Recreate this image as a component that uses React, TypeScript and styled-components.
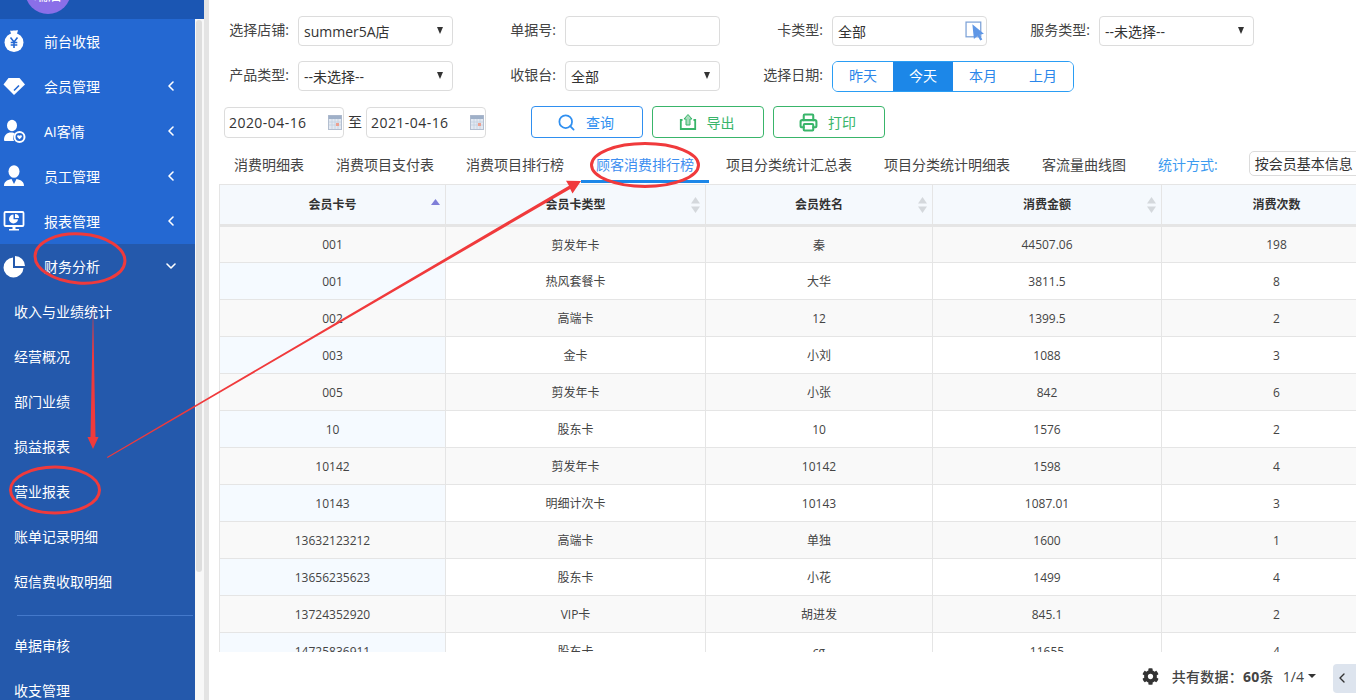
import React from "react";
import styled, { createGlobalStyle } from "styled-components";
import { ChevronLeft, ChevronDown, Search, Printer } from "lucide-react";
import { FaCog } from "react-icons/fa";

const FONT = `"Open Sans", "Noto Sans CJK SC", sans-serif`;

const Global = createGlobalStyle`
  html, body { margin: 0; padding: 0; height: 700px; overflow: hidden; background: #fff; }
  body { font-family: ${FONT}; color: #333; font-size: 14px; }
  * { box-sizing: border-box; }
`;

const Page = styled.div`
  position: relative;
  display: flex;
  width: 1356px;
  height: 700px;
  overflow: hidden;
`;

const SideColumn = styled.div`
  display: flex;
  flex-direction: column;
  width: 204px;
  flex: none;
  height: 700px;
`;
const SideHeader = styled.div`
  height: 19px;
  flex: none;
  background: #1b56b3;
  overflow: hidden;
`;
const Avatar = styled.div`
  width: 46px;
  height: 46px;
  margin: -32px 0 0 25px;
  border-radius: 50%;
  background: #8a6fe8;
  color: #fff;
  font-size: 14px;
  line-height: 54px;
  text-align: center;
`;
const SideBody = styled.div`
  display: flex;
  flex: 1;
  min-height: 0;
`;
const Nav = styled.nav`
  width: 195px;
  flex: none;
  background: #2468d2;
  overflow: hidden;
`;
const NavItem = styled.div`
  display: flex;
  align-items: center;
  height: 45px;
  padding: 0 16px 2px 2px;
  gap: 18px;
  color: #fff;
  font-size: 14px;
`;
const OpenGroup = styled.div`
  background: #2459ac;
  padding-bottom: 20px;
`;
const NavChevron = styled.span`
  display: flex;
  margin-left: auto;
`;
const SubItem = styled.div`
  display: flex;
  align-items: center;
  height: 45px;
  padding: 0 0 2px 14px;
  color: #fff;
  font-size: 14px;
`;
const SubDivider = styled.div`
  height: 1px;
  margin: 11px 2px 7px 17px;
  background: #4479cb;
`;
const ScrollTrack = styled.div`
  width: 9px;
  flex: none;
  background: #f8f8f8;
  padding: 1px 2px 0 1px;
`;
const ScrollThumb = styled.div`
  height: 552px;
  border-radius: 3px;
  background: #dedede;
`;
const Strip = styled.div`
  width: 5px;
  flex: none;
  background: #e4e4e4;
`;

const Main = styled.main`
  flex: 1;
  min-width: 0;
  display: flex;
  flex-direction: column;
  padding-top: 16px;
  overflow: hidden;
`;
const FilterRow = styled.div`
  display: flex;
  align-items: center;
  height: 30px;
  margin: 0 0 15px 20px;
  gap: 43px;
`;
const Field = styled.div`
  display: flex;
  align-items: center;
`;
const Label = styled.label`
  width: 69px;
  padding: 0 9px 4px 0;
  flex: none;
  text-align: right;
  font-size: 14px;
  white-space: nowrap;
  color: #444;
`;
const Control = styled.div`
  position: relative;
  display: flex;
  align-items: center;
  width: 155px;
  height: 30px;
  padding: 0 0 1px 5px;
  background: #fff;
  border: 1px solid #dcdcdc;
  border-radius: 4px;
  font-size: 14px;
  color: #333;
  white-space: nowrap;
`;
const Caret = styled.span`
  margin-left: auto;
  margin-right: 9px;
  width: 0;
  height: 0;
  border-left: 3.5px solid transparent;
  border-right: 3.5px solid transparent;
  border-top: 7px solid #333;
`;
const PickerIcon = styled.svg`
  margin-left: auto;
  margin-right: 0;
  width: 21px;
  height: 21px;
`;
const Segments = styled.div`
  display: flex;
  width: 242px;
  height: 31px;
  border: 1px solid #2a9df4;
  border-radius: 6px;
  overflow: hidden;
`;
const Segment = styled.div<{ $active?: boolean }>`
  flex: 1;
  display: flex;
  align-items: center;
  justify-content: center;
  padding-bottom: 2px;
  font-size: 14px;
  color: ${(p) => (p.$active ? "#fff" : "#2a86ea")};
  background: ${(p) => (p.$active ? "#1c87e8" : "#fff")};
`;
const ActionRow = styled.div`
  display: flex;
  align-items: center;
  height: 32px;
  margin-left: 15px;
`;
const DateBox = styled.div`
  display: flex;
  align-items: center;
  justify-content: space-between;
  width: 120px;
  height: 31px;
  padding: 0 1px 0 4px;
  border: 1px solid #dcdcdc;
  border-radius: 4px;
  font-size: 14px;
  letter-spacing: 0.45px;
`;
const DateSep = styled.span`
  width: 22px;
  padding-bottom: 2px;
  text-align: center;
  font-size: 14px;
`;
const Buttons = styled.div`
  display: flex;
  gap: 9px;
  margin-left: 45px;
`;
const ActionButton = styled.div<{ $tone: string }>`
  display: flex;
  align-items: center;
  justify-content: center;
  gap: 10px;
  width: 112px;
  height: 32px;
  padding: 0 3px 0 0;
  border: 1px solid ${(p) => p.$tone};
  border-radius: 4px;
  color: ${(p) => p.$tone};
  font-size: 14px;
`;

const TabBar = styled.div`
  display: flex;
  align-items: center;
  height: 36px;
  margin: 10px 0 0 10px;
  gap: 2px;
  white-space: nowrap;
`;
const Tab = styled.div<{ $active?: boolean }>`
  display: flex;
  align-items: center;
  height: 35px;
  padding: 0 15px;
  margin-top: -1px;
  font-size: 14px;
  color: ${(p) => (p.$active ? "#3d8ef0" : "#444")};
  border-bottom: 3px solid ${(p) => (p.$active ? "#1c87e8" : "transparent")};
`;
const StatLabel = styled.span`
  margin: 0 0 5px 15px;
  color: #3d9bf0;
  font-size: 14px;
`;
const StatSelect = styled.div`
  display: flex;
  align-items: center;
  flex: none;
  width: 140px;
  height: 25px;
  margin: 0 0 5px 29px;
  padding: 0 0 2px 5px;
  border: 1px solid #dcdcdc;
  border-radius: 5px;
  font-size: 14px;
`;

const TableClip = styled.div`
  height: 468px;
  margin-left: 10px;
  overflow: hidden;
  flex: none;
`;
const Table = styled.table`
  width: 1172px;
  table-layout: fixed;
  border-collapse: collapse;
  font-size: 12px;
`;
const HeadCell = styled.th`
  position: relative;
  height: 41px;
  padding: 0 0 1px;
  background: #f5f9fd;
  border: 1px solid #e5e5e5;
  border-bottom: 3px solid #e5e5e5;
  font-size: 12px;
  font-weight: 700;
  color: #333;
`;
const SortMark = styled.svg`
  position: absolute;
  right: 5px;
  top: 11px;
  width: 9px;
  height: 18px;
`;
const Row = styled.tr<{ $odd: boolean }>`
  background: ${(p) => (p.$odd ? "#f9f9f9" : "#fff")};
`;
const Cell = styled.td`
  height: 37px;
  padding: 0;
  text-align: center;
  border: 1px solid #e5e5e5;
  color: #444;
`;
const KeyCell = styled(Cell)<{ $odd: boolean }>`
  background: ${(p) => (p.$odd ? "#f9f9f9" : "#f5faff")};
`;

const Footer = styled.div`
  display: flex;
  align-items: center;
  flex: 1;
  justify-content: flex-end;
  font-size: 14px;
  color: #444;
`;
const Gear = styled.span`
  display: flex;
  margin-right: 13px;
  color: #333;
`;
const Total = styled.span`
  margin-right: 9px;
  font-weight: 500;
  letter-spacing: 0.25px;
`;
const TotalNum = styled.b`
  font-weight: 700;
`;
const PageCaret = styled.span`
  margin: 0 17px 0 4px;
  width: 0;
  height: 0;
  border-left: 4px solid transparent;
  border-right: 4px solid transparent;
  border-top: 4px solid #333;
`;
const PrevButton = styled.div`
  display: flex;
  align-items: center;
  width: 23px;
  height: 29px;
  padding-left: 1px;
  margin-top: 4px;
  background: #dde4ee;
  border-radius: 4px 0 0 4px;
`;

const Overlay = styled.svg`
  position: absolute;
  left: 0;
  top: 0;
  pointer-events: none;
`;

const IconSvg = styled.svg`
  width: 24px;
  height: 24px;
  flex: none;
`;

const blue = "#2468d2";
const BagIcon = () => (
  <IconSvg viewBox="0 0 24 24" fill="#fff">
    <path d="M8 1.500c1.500 1 2.500-.5 4 0s2.500-.8 4 0l-1.500 4.500h-5z" />
    <circle cx="12" cy="13.500" r="9.500" />
    <path d="M8.500 8.500 12 13l3.500-4.500M12 13v6M8.700 13.500h6.600M8.700 16h6.600" stroke={blue} strokeWidth="1.600" fill="none" />
  </IconSvg>
);
const GemIcon = () => (
  <IconSvg viewBox="0 0 24 24" fill="#fff">
    <path d="M6.500 4h11L23 10.500 12 21 1.500 10.500z" />
    <path d="M12 16.500l5-5" stroke={blue} strokeWidth="1.600" fill="none" />
  </IconSvg>
);
const ClientIcon = () => (
  <IconSvg viewBox="0 0 24 24" fill="#fff">
    <ellipse cx="10" cy="6.500" rx="5" ry="5.800" />
    <path d="M2 21c0-5 3-7.500 7-7.500 2 0 3 .5 4 1-2 2-2.500 5-1 7.500H3.500C2.500 22 2 21.800 2 21z" />
    <circle cx="17.500" cy="18" r="5" fill="none" stroke="#fff" strokeWidth="2" />
    <path d="M15 16.800c1-1 2-.6 2.500 0 .5-.6 1.500-1 2.500 0 0 1.500-1.500 2.700-2.500 3.400-1-.7-2.500-1.900-2.500-3.400z" />
  </IconSvg>
);
const UserIcon = () => (
  <IconSvg viewBox="0 0 24 24" fill="#fff">
    <ellipse cx="12" cy="7.500" rx="5.500" ry="6.300" />
    <path d="M2 22c0-4 2.500-6 7.500-7l2.500 5 2.500-5c5 1 7.500 3 7.500 7z" />
  </IconSvg>
);
const ScreenIcon = () => (
  <IconSvg viewBox="0 0 24 24" fill="#fff">
    <rect x="2.500" y="3" width="19" height="14" rx="1" fill="none" stroke="#fff" strokeWidth="1.800" />
    <path d="M11.500 5.500a4.500 4.500 0 1 0 4.500 4.800h-4.500z" />
    <path d="M13 5a4 4 0 0 1 4 4h-4z" />
    <path d="M10.500 17h3v3h3.500v1.500H7V20h3.500z" />
  </IconSvg>
);
const PieIcon = () => (
  <IconSvg viewBox="0 0 24 24" fill="#fff">
    <path d="M11 3.500A10 10 0 1 0 21.500 14H11z" />
    <path d="M13 2a10 10 0 0 1 10 10H13z" />
  </IconSvg>
);
const Calendar = () => (
  <svg width="14" height="15" viewBox="0 0 14 15">
    <rect x="0.500" y="0.500" width="13" height="14" fill="#e3e9f2" stroke="#b4bfd0" />
    <rect x="0.500" y="0.500" width="13" height="3.500" fill="#9fb0c8" />
    <path d="M1 7h12M1 10h12M4 4v10M7 4v10M10 4v10" stroke="#c3cfe0" strokeWidth="0.800" />
    <rect x="8" y="8" width="3" height="3" fill="#eda090" />
  </svg>
);
const ExportIcon = () => (
  <svg width="18" height="18" viewBox="0 0 18 18" fill="none">
    <path d="M3.500 7H1.800v9h14.400V7h-1.700" stroke="#39b56a" strokeWidth="1.800" />
    <path d="M9 1.500 13 6h-2v6H7V6H5z" fill="#a9ddbd" stroke="#39b56a" strokeWidth="1" />
  </svg>
);

const navTop = [
  { t: "前台收银", i: <BagIcon />, c: false },
  { t: "会员管理", i: <GemIcon />, c: true },
  { t: "AI客情", i: <ClientIcon />, c: true },
  { t: "员工管理", i: <UserIcon />, c: true },
  { t: "报表管理", i: <ScreenIcon />, c: true },
];
const subA = ["收入与业绩统计", "经营概况", "部门业绩", "损益报表", "营业报表", "账单记录明细", "短信费收取明细"];
const subB = ["单据审核", "收支管理"];
const tabs = ["消费明细表", "消费项目支付表", "消费项目排行榜", "顾客消费排行榜", "项目分类统计汇总表", "项目分类统计明细表", "客流量曲线图"];
const columns = [
  { t: "会员卡号", w: 226, s: "up" },
  { t: "会员卡类型", w: 260, s: "both" },
  { t: "会员姓名", w: 227, s: "both" },
  { t: "消费金额", w: 229, s: "both" },
  { t: "消费次数", w: 230, s: "none" },
];
const rows = [
  ["001", "剪发年卡", "秦", "44507.06", "198"],
  ["001", "热风套餐卡", "大华", "3811.5", "8"],
  ["002", "高端卡", "12", "1399.5", "2"],
  ["003", "金卡", "小刘", "1088", "3"],
  ["005", "剪发年卡", "小张", "842", "6"],
  ["10", "股东卡", "10", "1576", "2"],
  ["10142", "剪发年卡", "10142", "1598", "4"],
  ["10143", "明细计次卡", "10143", "1087.01", "3"],
  ["13632123212", "高端卡", "单独", "1600", "1"],
  ["13656235623", "股东卡", "小花", "1499", "4"],
  ["13724352920", "VIP卡", "胡进发", "845.1", "2"],
  ["14725836911", "股东卡", "cg", "11655", "4"],
];

const Sort = ({ kind }: { kind: string }) =>
  kind === "none" ? null : (
    <SortMark viewBox="0 0 9 18">
      {kind === "up" ? (
        <path d="M4.500 3 9 9H0z" fill="#7f7fd8" />
      ) : (
        <>
          <path d="M4.500 1 9 7.500H0z" fill="#d4d8dc" />
          <path d="M4.500 17 9 10.500H0z" fill="#d4d8dc" />
        </>
      )}
    </SortMark>
  );

export default function App() {
  return (
    <Page>
      <Global />
      <SideColumn>
        <SideHeader>
          <Avatar>瑞店</Avatar>
        </SideHeader>
        <SideBody>
          <Nav>
            {navTop.map((n) => (
              <NavItem key={n.t}>
                {n.i}
                <span>{n.t}</span>
                {n.c && (
                  <NavChevron>
                    <ChevronLeft size={16} strokeWidth={2.4} />
                  </NavChevron>
                )}
              </NavItem>
            ))}
            <OpenGroup>
              <NavItem>
                <PieIcon />
                <span>财务分析</span>
                <NavChevron>
                  <ChevronDown size={16} strokeWidth={2.4} />
                </NavChevron>
              </NavItem>
              {subA.map((s) => (
                <SubItem key={s}>{s}</SubItem>
              ))}
              <SubDivider />
              {subB.map((s) => (
                <SubItem key={s}>{s}</SubItem>
              ))}
            </OpenGroup>
          </Nav>
          <ScrollTrack>
            <ScrollThumb />
          </ScrollTrack>
        </SideBody>
      </SideColumn>
      <Strip />
      <Main>
        <FilterRow>
          <Field>
            <Label>选择店铺:</Label>
            <Control>
              summer5A店
              <Caret />
            </Control>
          </Field>
          <Field>
            <Label>单据号:</Label>
            <Control />
          </Field>
          <Field>
            <Label>卡类型:</Label>
            <Control>
              全部
              <PickerIcon viewBox="0 0 20 20">
                <rect x="1" y="2" width="14" height="14" fill="none" stroke="#7ea3d8" strokeWidth="1.200" />
                <path d="M7 4 18 13l-4 1 2.500 4.500-2 1-2.500-4.500-3.500 3z" fill="#5f97e6" />
              </PickerIcon>
            </Control>
          </Field>
          <Field>
            <Label>服务类型:</Label>
            <Control>
              --未选择--
              <Caret />
            </Control>
          </Field>
        </FilterRow>
        <FilterRow>
          <Field>
            <Label>产品类型:</Label>
            <Control>
              --未选择--
              <Caret />
            </Control>
          </Field>
          <Field>
            <Label>收银台:</Label>
            <Control>
              全部
              <Caret />
            </Control>
          </Field>
          <Field>
            <Label>选择日期:</Label>
            <Segments>
              <Segment>昨天</Segment>
              <Segment $active>今天</Segment>
              <Segment>本月</Segment>
              <Segment>上月</Segment>
            </Segments>
          </Field>
        </FilterRow>
        <ActionRow>
          <DateBox>
            2020-04-16
            <Calendar />
          </DateBox>
          <DateSep>至</DateSep>
          <DateBox>
            2021-04-16
            <Calendar />
          </DateBox>
          <Buttons>
            <ActionButton $tone="#2f8ff0">
              <Search size={19} strokeWidth={2.2} />
              查询
            </ActionButton>
            <ActionButton $tone="#39b56a">
              <ExportIcon />
              导出
            </ActionButton>
            <ActionButton $tone="#39b56a">
              <Printer size={19} strokeWidth={2.6} />
              打印
            </ActionButton>
          </Buttons>
        </ActionRow>
        <TabBar>
          {tabs.map((t, i) => (
            <Tab key={t} $active={i === 3}>
              {t}
            </Tab>
          ))}
          <StatLabel>统计方式:</StatLabel>
          <StatSelect>按会员基本信息</StatSelect>
        </TabBar>
        <TableClip>
          <Table>
            <colgroup>
              {columns.map((c) => (
                <col key={c.t} width={c.w} />
              ))}
            </colgroup>
            <thead>
              <tr>
                {columns.map((c) => (
                  <HeadCell key={c.t}>
                    {c.t}
                    <Sort kind={c.s} />
                  </HeadCell>
                ))}
              </tr>
            </thead>
            <tbody>
              {rows.map((r, i) => (
                <Row key={r[0] + i} $odd={i % 2 === 0}>
                  <KeyCell $odd={i % 2 === 0}>{r[0]}</KeyCell>
                  {r.slice(1).map((v, j) => (
                    <Cell key={j}>{v}</Cell>
                  ))}
                </Row>
              ))}
            </tbody>
          </Table>
        </TableClip>
        <Footer>
          <Gear>
            <FaCog size={17} />
          </Gear>
          <Total>
            共有数据：<TotalNum>60</TotalNum>条
          </Total>
          <span>1/4</span>
          <PageCaret />
          <PrevButton>
            <ChevronLeft size={16} color="#333" />
          </PrevButton>
        </Footer>
      </Main>
      <Overlay width="1356" height="700" viewBox="0 0 1356 700">
        <g fill="none" stroke="#f03a3c" strokeWidth="3">
          <ellipse cx="80" cy="258.500" rx="45" ry="24.500" transform="rotate(4 80 258.500)" />
          <ellipse cx="55" cy="490" rx="44.500" ry="23" />
          <ellipse cx="645" cy="165" rx="53.500" ry="21.500" />
        </g>
        <g fill="#f03a3c">
          <path d="M93 304 95.500 437H98.500L93 449 87.500 437H90.500z" />
          <path d="M107 457 569 185.700 566 180.800 581 181 572.500 193.500 570.200 188.900 107.500 458z" />
        </g>
      </Overlay>
    </Page>
  );
}
